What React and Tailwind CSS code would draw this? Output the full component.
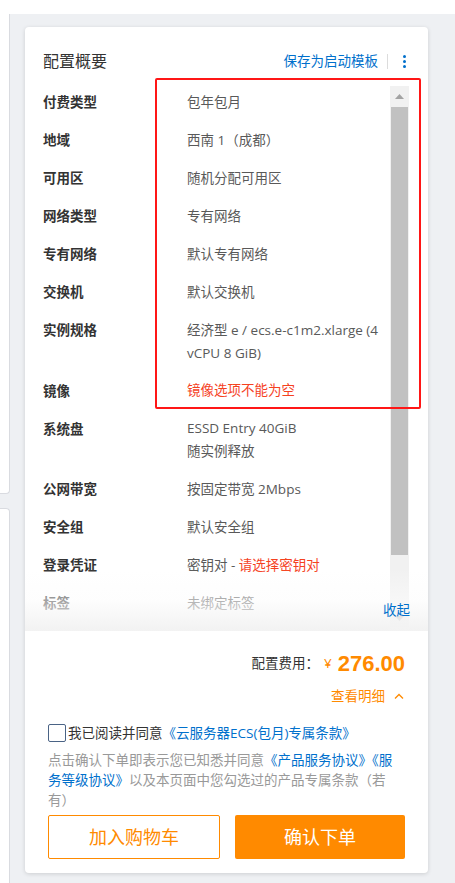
import React from 'react';

const rows = [
    { label: '付费类型', value: '包年包月' },
    { label: '地域', value: '西南 1（成都）' },
    { label: '可用区', value: '随机分配可用区' },
    { label: '网络类型', value: '专有网络' },
    { label: '专有网络', value: '默认专有网络' },
    { label: '交换机', value: '默认交换机' },
    { label: '实例规格', value: '经济型 e / ecs.e-c1m2.xlarge (4 vCPU 8 GiB)' },
    { label: '镜像', value: '镜像选项不能为空', error: true },
    { label: '系统盘', value: 'ESSD Entry 40GiB', sub: '随实例释放' },
    { label: '公网带宽', value: '按固定带宽 2Mbps' },
    { label: '安全组', value: '默认安全组' },
    { label: '登录凭证', value: '密钥对 - ', warn: '请选择密钥对' },
    { label: '标签', value: '未绑定标签' },
];

const Row = ({ row }) => (
    <div className="flex py-[7px]">
        <div className="w-[144px] shrink-0 leading-[24px] font-bold text-[#333]">{row.label}</div>
        <div className={`flex-1 leading-[23px] pt-[0.5px] ${row.error ? 'text-[#f5421f]' : 'text-[#595959]'}`}>
            {row.value}
            {row.warn && <span className="text-[#f5421f]">{row.warn}</span>}
            {row.sub && <div>{row.sub}</div>}
        </div>
    </div>
);

const Scrollbar = () => (
    <div className="w-[19px] mt-[3px] mb-[4px] mr-[19px] shrink-0 bg-[#f1f1f1] flex flex-col items-center">
        <div className="h-[17px] w-full flex items-center justify-center pt-[4px]">
            <svg width="9" height="5" viewBox="0 0 9 5"><path d="M4.5 0L9 5H0z" fill="#a3a3a3" /></svg>
        </div>
        <div className="mt-[4px] h-[448px] w-[17px] bg-[#c1c1c1]" />
        <div className="flex-1" />
        <div className="h-[17px] w-full flex items-center justify-center">
            <svg width="9" height="5" viewBox="0 0 9 5"><path d="M0 0H9L4.5 5z" fill="#a3a3a3" /></svg>
        </div>
    </div>
);

export default function App() {
    return (
        <div className="w-[455px] h-[883px] bg-white flex flex-col overflow-hidden text-[13.5px] font-['Open_Sans','Noto_Sans_CJK_SC',sans-serif]">
            <div className="h-[14px] shrink-0 bg-white" />
            <div className="flex flex-1 min-h-0">
                <div className="w-[10px] shrink-0 flex flex-col bg-[#eef0f3]">
                    <div className="h-[480px] bg-white border-r border-b border-[#d9dbe0] rounded-br-[4px]" />
                    <div className="h-[14px]" />
                    <div className="flex-1 bg-white border-r border-t border-[#d9dbe0] rounded-tr-[4px]" />
                </div>
                <div className="flex-1 bg-[#eef0f3] pl-[15px] pt-[13px]">
                    <div className="relative w-[403px] h-[846px] bg-white rounded-[4px] shadow-[0_1px_4px_rgba(0,0,0,0.14)] flex flex-col">
                        {/* header */}
                        <div className="flex items-center pt-[24px] pb-[12px] pl-[18px] pr-[22px]">
                            <h2 className="text-[16px] leading-[20px] text-[#333]">配置概要</h2>
                            <div className="ml-auto flex items-center">
                                <span className="text-[#0070cc] leading-[20px]">保存为启动模板</span>
                                <span className="w-px h-[15px] bg-[#dcdcdc] ml-[9px] mr-[15px]" />
                                <div className="flex flex-col gap-[2px]">
                                    <span className="w-[3px] h-[3px] rounded-full bg-[#0070cc]" />
                                    <span className="w-[3px] h-[3px] rounded-full bg-[#0070cc]" />
                                    <span className="w-[3px] h-[3px] rounded-full bg-[#0070cc]" />
                                </div>
                            </div>
                        </div>

                        {/* summary list */}
                        <div className="relative h-[548px] shrink-0 flex overflow-hidden">
                            <div className="flex-1 pl-[18px]">
                                {rows.map((row) => (
                                    <Row key={row.label} row={row} />
                                ))}
                            </div>
                            <Scrollbar />
                            <div className="absolute left-0 right-0 bottom-0 h-[62px] bg-[linear-gradient(to_bottom,rgba(255,255,255,0),rgba(252,252,252,0.55)_50%,#f2f2f2)]" />
                            <span className="absolute right-[18px] bottom-[11px] leading-[20px] text-[#0070cc]">收起</span>
                        </div>

                        {/* footer */}
                        <div className="flex-1 px-[23px] pt-[20px] pb-[14px] flex flex-col">
                            <div className="flex items-center justify-end h-[24px]">
                                <span className="text-[#333]">配置费用：</span>
                                <span className="ml-[5px] text-[#ff8a00]">¥</span>
                                <span className="ml-[6px] text-[22px] font-bold text-[#ff8a00] font-['Liberation_Sans',Arial,sans-serif]">276.00</span>
                            </div>
                            <div className="flex items-center justify-end mt-[11px] leading-[20px] text-[#ff8a00]">
                                查看明细
                                <svg className="ml-[9px] mr-[1px]" width="10" height="6" viewBox="0 0 10 6" fill="none">
                                    <path d="M1 5.5L5 1.5L9 5.5" stroke="#ff8a00" strokeWidth="1.3" />
                                </svg>
                            </div>
                            <div className="flex items-center h-[24px] mt-[15px]">
                                <span className="w-[18px] h-[18px] border border-[#4a6385] rounded-[2px] bg-white" />
                                <span className="ml-[2px] text-[#333]">我已阅读并同意</span>
                                <span className="text-[#0070cc]">《云服务器ECS(包月)专属条款》</span>
                            </div>
                            <p className="mt-[5px] leading-[20px] text-[#999]">
                                点击确认下单即表示您已知悉并同意<span className="text-[#0070cc]">《产品服务协议》《服务等级协议》</span>以及本页面中您勾选过的产品专属条款（若有）
                            </p>
                            <div className="mt-[5px] flex gap-[15px]">
                                <button className="flex-1 h-[44px] border border-[#ff8a00] rounded-[2px] text-[18px] text-[#ff8a00] bg-white">加入购物车</button>
                                <button className="flex-1 h-[44px] rounded-[2px] text-[18px] text-white bg-[#ff8a00]">确认下单</button>
                            </div>
                        </div>

                        {/* annotation */}
                        <div className="absolute left-[130px] top-[51px] w-[266px] h-[331px] border-2 border-[#ff1616] rounded-[2px] pointer-events-none" />
                    </div>
                </div>
            </div>
        </div>
    );
}
